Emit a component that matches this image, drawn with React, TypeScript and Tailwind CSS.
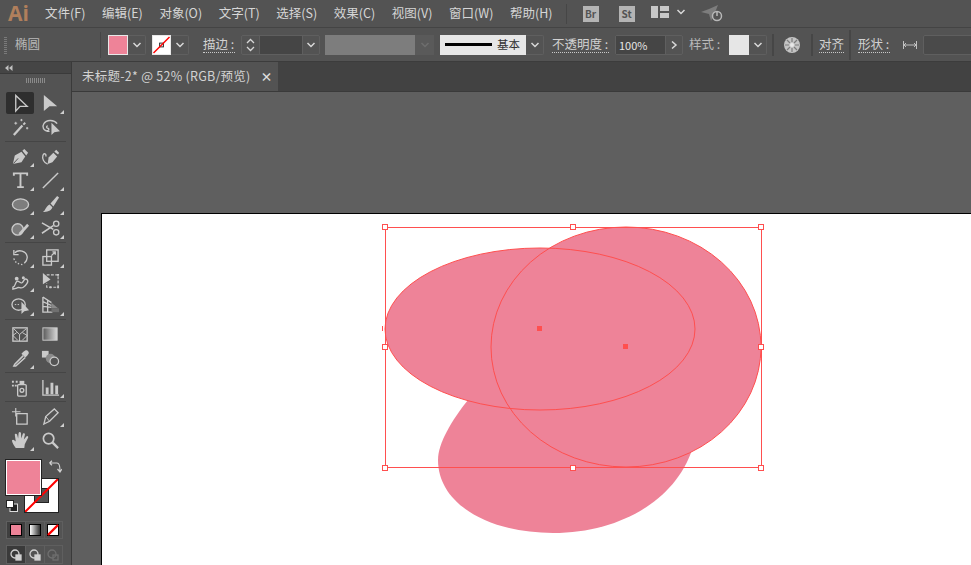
import React from "react";

const menus = ["文件(F)", "编辑(E)", "对象(O)", "文字(T)", "选择(S)", "效果(C)", "视图(V)", "窗口(W)", "帮助(H)"];

function Chevron({ right = false, dim = false }: { right?: boolean; dim?: boolean }) {
  return (
    <svg width="10" height="8" viewBox="0 0 10 8" fill="none" stroke={dim ? "#6e6e6e" : "#d8d8d8"} strokeWidth="1.5">
      {right ? <path d="M3 0.5 L7 4 L3 7.5" /> : <path d="M1.5 2 L5 5.5 L8.5 2" />}
    </svg>
  );
}

function Drop({ w = "w-[18px]" }: { w?: string }) {
  return (
    <div className={`${w} h-[20px] flex items-center justify-center border border-[#5f5f5f] border-l-0 rounded-r-[2px]`}>
      <Chevron />
    </div>
  );
}

function Label({ text, className = "" }: { text: string; className?: string }) {
  return <span className={`text-[12.5px] leading-[16px] text-[#d2d2d2] border-b border-dotted border-[#c8c8c8] whitespace-nowrap ${className}`}>{text}</span>;
}

function NoneSwatch({ size = 18 }: { size?: number }) {
  return (
    <svg width={size} height={size} viewBox="0 0 18 18">
      <rect width="18" height="18" fill="#fff" />
      <rect x="7" y="7" width="4" height="4" fill="none" stroke="#222" />
      <path d="M0.5 17.5 L17.5 0.5" stroke="#f00" strokeWidth="1.6" />
    </svg>
  );
}

const S = { fill: "none", stroke: "#cacaca", strokeWidth: 1.4 };
const F = { fill: "#cacaca" };

const icons: Record<string, React.ReactNode> = {
  select: <path d="M5 1.5 V18 L9.5 13 H17 Z" {...S} />,
  direct: <path d="M3 1 V18 L9 13 H17 Z" {...F} />,
  wand: (
    <g>
      <path d="M3 18 L12 8" stroke="#cacaca" strokeWidth="2.4" />
      <path d="M13 7 L15 5" stroke="#cacaca" strokeWidth="2" />
      <path d="M5 4 V7 M3.5 5.5 H6.5 M17 9.5 V12 M15.8 10.7 H18.2 M11 1 V3.4 M9.8 2.2 H12.2" stroke="#cacaca" />
    </g>
  ),
  lasso: (
    <g>
      <path d="M9 14 C2 14 1 9 3 6 C6 1 14 2 17 6" {...S} />
      <path d="M7 8 C5 9 6 11 8 11 C9 12 7 14 6 13" {...S} />
      <path d="M11 5 V18 L14 15 L20 14 Z" {...F} />
    </g>
  ),
  pen: (
    <g>
      <path d="M2 18 L4 9 L11 5 L15 10 L11 16 Z" {...F} />
      <path d="M12 4 L14 2 L18 6 L16 9 Z" {...F} />
      <path d="M2.5 17.5 L7.5 12" stroke="#535353" />
    </g>
  ),
  addAnchor: (
    <g>
      <path d="M7 18 L8 11 L13 6 L17 10 L12 16 Z" {...F} />
      <path d="M14 5 L16 3 L19 6 L18 8 Z" {...F} />
      <path d="M7 18 C3 17 1 12 2 9 C3 6 6 7 5 10" {...S} />
    </g>
  ),
  type: <path d="M3 5 V2.5 H17 V5 M10 2.5 V17 M6.5 17 H13.5" fill="none" stroke="#cacaca" strokeWidth="2" />,
  line: <path d="M2 18 L18 2" stroke="#cacaca" strokeWidth="1.5" />,
  ellipse: <ellipse cx="10" cy="10" rx="8.5" ry="6" fill="#7d7d7d" stroke="#cacaca" strokeWidth="1.4" />,
  brush: (
    <g>
      <path d="M10 9 L17 1 L19 2.5 L13 12 Z" {...F} />
      <path d="M9 10 L12 13 C11 17 6 18 2 18 C5 16 5 12 9 10 Z" {...F} />
    </g>
  ),
  shaper: (
    <g>
      <ellipse cx="7" cy="11" rx="6" ry="6" fill="#7d7d7d" stroke="#cacaca" strokeWidth="1.4" />
      <path d="M8 15 L17 5 L19 7 L10 17 Z" {...F} />
    </g>
  ),
  scissors: (
    <g>
      <path d="M1 4 L13 11 M1 15 L13 7" stroke="#cacaca" strokeWidth="1.6" />
      <circle cx="16" cy="5" r="2.8" {...S} />
      <circle cx="16" cy="14" r="2.8" {...S} />
    </g>
  ),
  rotate: (
    <g>
      <path d="M4 5 C8 1 16 3 17 9 C17.5 12 16 14 14 16" {...S} />
      <path d="M3 2 V7 H8" {...S} />
      <path d="M3 11 C4 15 7 17 12 17.5" fill="none" stroke="#cacaca" strokeWidth="1.4" strokeDasharray="1.5 2" />
    </g>
  ),
  scale: (
    <g>
      <rect x="2" y="9" width="9" height="9" {...S} />
      <rect x="6" y="2" width="12" height="12" {...S} />
      <path d="M11 8 L15 4 M12 4 H15 V7" {...S} />
    </g>
  ),
  warp: (
    <g>
      <path d="M2 16 C5 15 4 12 6 10 C8 8 9 13 12 11 C14 9 14 6 17 8 C19 10 16 14 13 16 C10 18 8 15 6 17 L2 18 Z" {...S} />
      <circle cx="6" cy="7" r="2" {...F} />
      <circle cx="13" cy="6" r="1.6" {...F} />
    </g>
  ),
  freeTransform: (
    <g>
      <path d="M2 1 V13 L10 8 Z" {...F} />
      <path d="M6 3 H18 V16 H6 V12" fill="none" stroke="#cacaca" strokeWidth="1.2" strokeDasharray="3 1.5" />
      <path d="M17 2 H19 V4 H17 Z M17 15 H19 V17 H17 Z M9 15 H11 V17 H9 Z" {...F} />
    </g>
  ),
  shapeBuilder: (
    <g>
      <ellipse cx="8" cy="9" rx="7" ry="6" {...S} />
      <path d="M4 9 H9" stroke="#cacaca" strokeDasharray="1.5 1.5" />
      <path d="M11 6 V19 L14 16 L19 15 Z" {...F} />
    </g>
  ),
  perspective: (
    <g>
      <path d="M2 1 V17 H12 M2 1 L11 7 M2 6 L11 10 M2 11 L11 12 M7 4 V17" {...S} />
      <path d="M11 7 L18 13 H11 Z" fill="#8a8a8a" />
      <path d="M11 13 H19 V17 H11 Z" fill="#707070" />
    </g>
  ),
  mesh: (
    <g>
      <rect x="2" y="3" width="15" height="14" {...S} />
      <path d="M3 4 L9 10 L16 4 M9 10 V17 M2 11 L6 8 M2 11 L7 16 M17 11 L12 8 M17 11 L12 16" fill="none" stroke="#cacaca" />
    </g>
  ),
  gradient: (
    <g>
      <defs>
        <linearGradient id="toolGrad" x1="0" x2="1" y1="0" y2="0">
          <stop offset="0" stopColor="#5a5a5a" />
          <stop offset="1" stopColor="#d8d8d8" />
        </linearGradient>
      </defs>
      <rect x="2" y="3" width="15" height="13" fill="url(#toolGrad)" stroke="#cacaca" />
    </g>
  ),
  dropper: (
    <g>
      <path d="M13 7 L4 16 L3 18 L5 18 L15 9" {...S} strokeWidth={1.6} />
      <path d="M11 5 L13 3 L15 1.5 C17 0.5 19.5 3 18.5 5 L17 7 L15 9 Z" {...F} />
    </g>
  ),
  blend: (
    <g>
      <rect x="1" y="2" width="7" height="7" {...F} />
      <circle cx="10" cy="10" r="5" fill="#8a8a8a" />
      <circle cx="14" cy="13" r="4.5" fill="#535353" stroke="#cacaca" strokeWidth="1.3" />
    </g>
  ),
  spray: (
    <g>
      <rect x="7" y="7" width="9" height="12" rx="1" {...S} />
      <rect x="9" y="3" width="5" height="4" {...F} />
      <circle cx="11.5" cy="13" r="2" {...S} />
      <path d="M1 3 H3 V5 H1 Z M5 3 H7 V5 H5 Z M1 7 H3 V9 H1 Z M4 7 H6 V9 H4 Z" {...F} />
    </g>
  ),
  chart: (
    <g>
      <path d="M2 2 V18 H19" {...S} />
      <path d="M5 10 H8 V17 H5 Z M10 5 H13 V17 H10 Z M15 8 H18 V17 H15 Z" {...F} />
    </g>
  ),
  artboard: (
    <g>
      <path d="M6 7 H17 V18 H6 Z" {...S} />
      <path d="M5 1 V10 M1 5 H10" stroke="#cacaca" strokeWidth="1.2" />
    </g>
  ),
  slice: (
    <g>
      <path d="M3 18 L5 10 L14 2 L18 6 L9 15 Z" {...S} />
      <path d="M5 10 L9 15" stroke="#cacaca" />
    </g>
  ),
  hand: (
    <path d="M5 18 C3 15 1 12 1 10 C2 8 4 10 5 11 L4 4 C4 2.5 6 2.5 6.5 4 L7.5 8 L8 2 C8.5 0.8 10 0.8 10.5 2 L10.8 8 L12.5 2.8 C13.5 1.8 15 2.5 14.6 4 L13.5 9 L16.5 5.5 C17.5 5 18.5 6 18 7 L14.5 14 L14 18 Z" {...F} />
  ),
  zoom: (
    <g>
      <circle cx="8" cy="8" r="5.5" {...S} strokeWidth={1.8} />
      <path d="M12 12 L18 18" stroke="#cacaca" strokeWidth="2.4" />
    </g>
  ),
};

function Tool({ name, flag, active }: { name: string; flag?: boolean; active?: boolean }) {
  return (
    <div className={`relative w-[28px] h-[22px] flex items-center justify-center rounded-[2px] ${active ? "bg-[#2e2e2e]" : ""}`}>
      <svg width="19" height="19" viewBox="0 0 20 20">{icons[name]}</svg>
      {flag && <div className="absolute right-[0px] bottom-[0px] w-0 h-0 border-l-[4px] border-l-transparent border-b-[4px] border-b-[#cfcfcf]" />}
    </div>
  );
}

function ToolRow({ a, b, fa, fb, active }: { a: string; b: string; fa?: boolean; fb?: boolean; active?: boolean }) {
  return (
    <div className="h-[24px] flex items-center pl-[6px] gap-[2px]">
      <Tool name={a} flag={fa} active={active} />
      <Tool name={b} flag={fb} />
    </div>
  );
}

function Sep() {
  return <div className="h-px bg-[#454545] mx-[5px] my-[2px]" />;
}

function Toolbar() {
  return (
    <div className="w-[72px] shrink-0 bg-[#535353] border-r border-[#3a3a3a] flex flex-col">
      <div className="h-[12px] bg-[#454545] border-b border-[#3a3a3a] pl-[5px] flex items-center">
        <svg width="8" height="6" viewBox="0 0 8 6" fill="#c0c0c0">
          <path d="M3.5 0 V6 L0 3 Z M7.5 0 V6 L4 3 Z" />
        </svg>
      </div>
      <div className="flex justify-center pt-[4px] h-[17px]">
        <div className="w-[20px] h-[5px] bg-[repeating-linear-gradient(90deg,#8a8a8a_0,#8a8a8a_1px,transparent_1px,transparent_2px)]" />
      </div>
      <ToolRow a="select" b="direct" fb active />
      <ToolRow a="wand" b="lasso" />
      <Sep />
      <ToolRow a="pen" b="addAnchor" fa />
      <ToolRow a="type" b="line" fa fb />
      <ToolRow a="ellipse" b="brush" fa fb />
      <ToolRow a="shaper" b="scissors" fa fb />
      <Sep />
      <ToolRow a="rotate" b="scale" fa fb />
      <ToolRow a="warp" b="freeTransform" fa />
      <ToolRow a="shapeBuilder" b="perspective" fa fb />
      <Sep />
      <ToolRow a="mesh" b="gradient" />
      <ToolRow a="dropper" b="blend" fa />
      <Sep />
      <ToolRow a="spray" b="chart" fb />
      <Sep />
      <ToolRow a="artboard" b="slice" fb />
      <ToolRow a="hand" b="zoom" fa />
      <ColorBlock />
    </div>
  );
}

function ColorBlock() {
  return (
    <div className="relative h-[110px] shrink-0">
      {/* stroke box */}
      <div className="absolute left-[24px] top-[26px] w-[35px] h-[35px] bg-white border border-[#222]">
        <div className="absolute left-[9px] top-[9px] w-[15px] h-[15px] bg-[#535353] border border-[#222]" />
        <svg className="absolute inset-0" width="33" height="33" viewBox="0 0 33 33">
          <path d="M0 33 L33 0" stroke="#f00" strokeWidth="2" />
        </svg>
      </div>
      {/* fill box */}
      <div className="absolute left-[6px] top-[8px] w-[35px] h-[35px] bg-[#ee8398] border border-white outline outline-[#222]" />
      <svg className="absolute left-[49px] top-[8px]" width="13" height="13" viewBox="0 0 13 13" fill="none" stroke="#d0d0d0" strokeWidth="1.2">
        <path d="M1 3 H8 C10 3 11 5 11 11 M0.5 3 L3 0.8 M0.5 3 L3 5.2 M8.5 9 L11 12 L13 9" />
      </svg>
      <svg className="absolute left-[6px] top-[48px]" width="12" height="12" viewBox="0 0 12 12">
        <rect x="4" y="4" width="7.5" height="7.5" fill="#222" stroke="#ddd" />
        <rect x="0.5" y="0.5" width="7" height="7" fill="#fff" stroke="#222" />
      </svg>
      <div className="absolute left-[6px] top-[69px] w-[57px] h-[18px] flex border border-[#5f5f5f]">
        <div className="w-[19px] bg-[#3f3f3f] flex items-center justify-center">
          <div className="w-[12px] h-[12px] bg-[#ee8398] border border-black" />
        </div>
        <div className="w-[19px] flex items-center justify-center border-l border-[#5f5f5f]">
          <div className="w-[12px] h-[12px] bg-gradient-to-r from-white to-[#333] border border-black" />
        </div>
        <div className="w-[19px] flex items-center justify-center border-l border-[#5f5f5f]">
          <svg width="12" height="12" viewBox="0 0 12 12">
            <rect x="0.5" y="0.5" width="11" height="11" fill="#fff" stroke="#000" />
            <path d="M1 11 L11 1" stroke="#f00" strokeWidth="2.4" />
          </svg>
        </div>
      </div>
      <div className="absolute left-[6px] top-[93px] w-[57px] h-[19px] flex border border-[#5f5f5f]">
        {[0, 1, 2].map((i) => (
          <div key={i} className={`w-[19px] flex items-center justify-center ${i === 0 ? "bg-[#3a3a3a]" : "border-l border-[#5f5f5f]"}`}>
            <svg width="12" height="12" viewBox="0 0 12 12" fill="none" stroke={i === 2 ? "#6f6f6f" : "#d0d0d0"} strokeWidth="1.3">
              <circle cx="5" cy="5" r="4" />
              <rect x="6" y="6" width="5" height="5" fill={i === 2 ? "none" : "#d0d0d0"} />
            </svg>
          </div>
        ))}
      </div>
    </div>
  );
}

function MenuBar() {
  return (
    <div className="h-[28px] shrink-0 bg-[#535353] border-b border-[#444444] flex items-center [&>*]:shrink-0">
      <span className="w-[45px] pl-[8px] text-[21px] leading-none font-bold text-[#b07f5c] font-['Open_Sans',sans-serif]">Ai</span>
      <div className="flex gap-[16.6px] text-[12.5px] text-[#d6d6d6]">
        {menus.map((m) => (
          <span key={m} className="whitespace-nowrap">{m}</span>
        ))}
      </div>
      <div className="w-px h-[20px] bg-[#464646] ml-[13px]" />
      <div className="ml-[16px] w-[16px] h-[16px] bg-[#b4b4b4] text-[#535353] text-[10px] font-bold leading-[16px] text-center">Br</div>
      <div className="ml-[20px] w-[16px] h-[16px] bg-[#b4b4b4] text-[#535353] text-[10px] font-bold leading-[16px] text-center">St</div>
      <svg className="ml-[16px] mb-[4px]" width="18" height="12" viewBox="0 0 18 12" fill="#c8c8c8">
        <path d="M0 0 H7 V12 H0 Z M9 0 H18 V5 H9 Z M9 7 H18 V12 H9 Z" />
      </svg>
      <div className="ml-[7px] mb-[4px] flex"><Chevron /></div>
      <svg className="ml-[15px]" width="24" height="20" viewBox="0 0 24 20" fill="none">
        <path d="M0 8 L8 5 L17 1 L15 6 L10 17 L8 10 Z" fill="#7d7d7d" />
        <circle cx="16" cy="12" r="4.5" fill="#535353" stroke="#b8b8b8" strokeWidth="1.5" />
        <path d="M16 7 V12" stroke="#b8b8b8" strokeWidth="1.5" />
      </svg>
    </div>
  );
}

function OptionsBar() {
  return (
    <div className="h-[34px] shrink-0 bg-[#535353] border-b border-[#3c3c3c] flex items-center text-[12.5px] text-[#d2d2d2] [&>*]:shrink-0">
      <div className="ml-[4px] w-[3px] h-[18px] bg-[repeating-linear-gradient(0deg,#7a7a7a_0,#7a7a7a_1px,transparent_1px,transparent_2px)]" />
      <span className="ml-[8px] w-[85px] text-[#b8b8b8]">椭圆</span>
      <div className="w-px h-[26px] bg-[#464646]" />
      <div className="ml-[7px] w-[20px] h-[20px] bg-[#ee8398] border border-[#e8e8e8]" />
      <Drop />
      <div className="ml-[6px] w-[19px] h-[20px] flex items-center justify-center bg-white border border-[#e8e8e8]">
        <NoneSwatch />
      </div>
      <Drop />
      <Label text="描边 :" className="ml-[14px] w-[32px]" />
      <div className="ml-[6px] h-[20px] flex border border-[#5f5f5f] rounded-[2px]">
        <div className="w-[17px] flex flex-col items-center justify-center gap-[2px]">
          <svg width="9" height="6" viewBox="0 0 9 6" fill="none" stroke="#d8d8d8" strokeWidth="1.3"><path d="M1 5 L4.5 1.5 L8 5" /></svg>
          <svg width="9" height="6" viewBox="0 0 9 6" fill="none" stroke="#d8d8d8" strokeWidth="1.3"><path d="M1 1 L4.5 4.5 L8 1" /></svg>
        </div>
        <div className="w-[44px] bg-[#454545] border-x border-[#5f5f5f]" />
        <div className="w-[16px] flex items-center justify-center"><Chevron /></div>
      </div>
      <div className="ml-[5px] w-[90px] h-[20px] bg-[#7d7d7d]" />
      <div className="w-[19px] h-[20px] bg-[#5a5a5a] flex items-center justify-center"><Chevron dim /></div>
      <div className="ml-[6px] w-[86px] h-[20px] bg-[#e6e6e6] flex items-center pl-[5px] gap-[5px]">
        <div className="w-[47px] h-[3px] bg-black" />
        <span className="text-[11.5px] text-[#333]">基本</span>
      </div>
      <Drop />
      <Label text="不透明度 :" className="ml-[8px] w-[57px]" />
      <div className="ml-[6px] h-[20px] flex border border-[#5f5f5f] rounded-[2px]">
        <div className="w-[49px] bg-[#454545] text-[11px] leading-[18px] pl-[3px] text-[#e4e4e4]">100%</div>
        <div className="w-[17px] flex items-center justify-center border-l border-[#5f5f5f]"><Chevron right /></div>
      </div>
      <span className="ml-[6px] w-[32px] whitespace-nowrap text-[#b8b8b8]">样式 :</span>
      <div className="ml-[8px] w-[20px] h-[20px] bg-[#e6e6e6]" />
      <Drop />
      <div className="ml-[5px] w-[2px] h-[22px] bg-[#464646]" />
      <svg className="ml-[10px]" width="16" height="16" viewBox="0 0 16 16">
        <circle cx="8" cy="8" r="8" fill="#c4c4c4" />
        <circle cx="8" cy="8" r="2" fill="#e8e8e8" />
        <path d="M8 1 V5 M8 11 V15 M1 8 H5 M11 8 H15 M3 3 L6 6 M10 10 L13 13 M13 3 L10 6 M6 10 L3 13" stroke="#7d7d7d" strokeWidth="1.2" />
      </svg>
      <div className="ml-[11px] w-[2px] h-[22px] bg-[#464646]" />
      <Label text="对齐" className="ml-[6px] w-[25px]" />
      <div className="ml-[5px] w-[2px] h-[30px] bg-[#464646]" />
      <Label text="形状 :" className="ml-[7px] w-[32px]" />
      <svg className="ml-[13px]" width="14" height="8" viewBox="0 0 14 8" fill="none" stroke="#c0c0c0">
        <path d="M0.5 0 V8 M13.5 0 V8 M1 4 H13 M3 2 L1 4 L3 6 M11 2 L13 4 L11 6" />
      </svg>
      <div className="ml-[6px] w-[60px] h-[20px] bg-[#4a4a4a] border border-[#5f5f5f] rounded-[2px]" />
    </div>
  );
}

function Drawing() {
  const handles = [
    [385, 227],
    [573, 227],
    [761, 227],
    [385, 347],
    [761, 347],
    [385, 468],
    [573, 468],
    [761, 468],
  ];
  return (
    <svg className="block" width="870" height="352" viewBox="102 214 870 352">
      <path d="M468 400 C452 420 438 443 438 460 C438 505 490 533 553 533 C620 533 675 500 692 450 L600 400 Z" fill="#ee8398" />
      <ellipse cx="540" cy="329" rx="155" ry="81" fill="#ee8398" />
      <ellipse cx="626" cy="347" rx="135" ry="120" fill="#ee8398" />
      <ellipse cx="540" cy="329" rx="155" ry="81" fill="none" stroke="#ff4f4f" />
      <ellipse cx="626" cy="347" rx="135" ry="120" fill="none" stroke="#ff4f4f" />
      <rect x="385.5" y="227.5" width="376" height="240" fill="none" stroke="#ff4f4f" />
      <rect x="537" y="326" width="5" height="5" fill="#ff4f4f" />
      <rect x="623" y="344" width="5" height="5" fill="#ff4f4f" />
      <path d="M382.5 326 V331" stroke="#ff4f4f" />
      {handles.map(([x, y]) => (
        <rect key={`${x}-${y}`} x={x - 2.5} y={y - 2.5} width="5" height="5" fill="#fff" stroke="#ff4f4f" />
      ))}
    </svg>
  );
}

export default function App() {
  return (
    <div className="w-[971px] h-[565px] overflow-hidden flex flex-col bg-[#535353] font-['Noto_Sans_CJK_SC','Noto_Sans',sans-serif]">
      <MenuBar />
      <OptionsBar />
      <div className="flex-1 flex min-h-0">
        <Toolbar />
        <div className="flex-1 flex flex-col min-w-0">
          <div className="h-[30px] shrink-0 bg-[#424242] border-b border-[#3a3a3a] flex">
            <div className="w-[206px] bg-[#535353] flex items-center pl-[10px] text-[12.5px] tracking-[0.25px] text-[#d2d2d2] whitespace-nowrap">
              <span>未标题-2* @ 52% (RGB/预览)</span>
              <span className="ml-[10px] text-[12px] font-bold leading-none text-[#e0e0e0]">×</span>
            </div>
          </div>
          <div className="flex-1 min-h-0 bg-[#5f5f5f] pt-[121px] pl-[29px]">
            <div className="w-[870px] h-[352px] bg-white border-l border-t border-black">
              <Drawing />
            </div>
          </div>
        </div>
      </div>
    </div>
  );
}
